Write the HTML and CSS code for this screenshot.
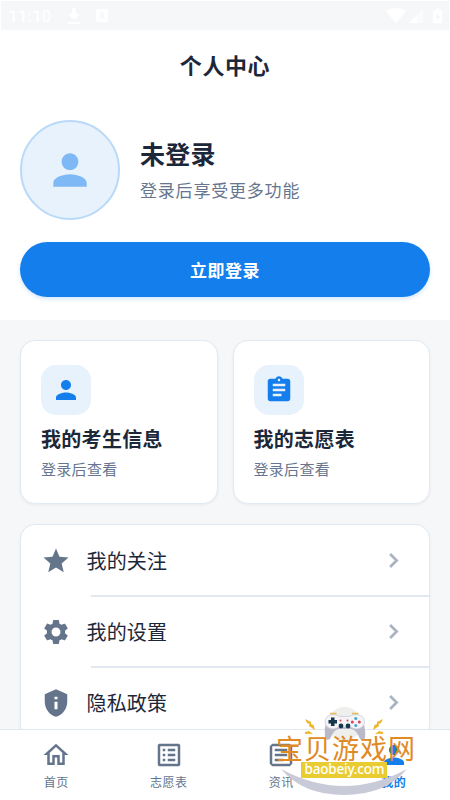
FILE: index.html
```html
<!DOCTYPE html>
<html lang="zh-CN">
<head>
<meta charset="utf-8">
<title>个人中心</title>
<link rel="stylesheet" href="styles.css">
</head>
<body>
<svg class="defs" width="0" height="0">
  <symbol id="person" viewBox="0 0 24 24"><path d="M12 12c2.21 0 4-1.79 4-4s-1.79-4-4-4-4 1.79-4 4 1.79 4 4 4zm0 2c-2.67 0-8 1.34-8 4v2h16v-2c0-2.66-5.33-4-8-4z"/></symbol>
  <symbol id="chevron" viewBox="0 0 24 24"><path d="M10 6L8.59 7.41 13.17 12l-4.58 4.59L10 18l6-6z" stroke="currentColor" stroke-width=".3"/></symbol>
</svg>
<div class="app">
  <div class="status">
    <span class="clock">11:10</span>
    <svg class="st-down" viewBox="0 0 12 16"><path d="M4 0h4v6h4l-6 6-6-6h4zM0 14h12v2H0z"/></svg>
    <svg class="st-box" viewBox="0 0 12 13"><path fill-rule="evenodd" d="M1 0h10l1 1v11l-1 1H1l-1-1V1zM5 3L3 10h1.3l.4-1.5h2.6l.4 1.5H9L7 3zm1 1.6l.8 2.7H5.200z"/></svg>
    <svg class="st-wifi" viewBox="0 0 20 15"><path d="M0 3Q10-3 20 3L10 15z"/></svg>
    <svg class="st-signal" viewBox="0 0 14 14"><path opacity=".45" d="M0 14L14 0v14z"/><path d="M0 14l8-8v8z"/></svg>
    <svg class="st-battery" viewBox="0 0 10 16"><path fill-rule="evenodd" d="M3 0h4v2h3v14H0V2h3zM6 4L2 10h2.500v4L8 8H5.500z"/></svg>
  </div>
  <header class="title">个人中心</header>
  <section class="profile">
    <div class="user">
      <div class="avatar"><svg><use href="#person"/></svg></div>
      <div class="who">
        <div class="name">未登录</div>
        <div class="hint">登录后享受更多功能</div>
      </div>
    </div>
    <div class="login">立即登录</div>
  </section>
  <main class="content">
    <div class="cards">
      <div class="card">
        <div class="tile"><svg><use href="#person"/></svg></div>
        <div class="card-title">我的考生信息</div>
        <div class="card-sub">登录后查看</div>
      </div>
      <div class="card">
        <div class="tile"><svg viewBox="0 0 24 24"><path d="M19 3h-4.180C14.400 1.840 13.300 1 12 1s-2.400.84-2.820 2H5c-1.100 0-2 .9-2 2v14c0 1.100.9 2 2 2h14c1.100 0 2-.9 2-2V5c0-1.100-.9-2-2-2zm-7 0c.55 0 1 .45 1 1s-.45 1-1 1-1-.45-1-1 .45-1 1-1zm2 14H7v-2h7v2zm3-4H7v-2h10v2zm0-4H7V7h10v2z"/></svg></div>
        <div class="card-title">我的志愿表</div>
        <div class="card-sub">登录后查看</div>
      </div>
    </div>
    <div class="menu">
      <div class="row">
        <svg class="lead" viewBox="0 0 24 24"><path d="M12 17.270L18.180 21l-1.640-7.030L22 9.240l-7.190-.61L12 2 9.190 8.630 2 9.240l5.460 4.730L5.820 21z"/></svg>
        <span>我的关注</span><svg class="go"><use href="#chevron"/></svg>
      </div>
      <div class="row">
        <svg class="lead" viewBox="0 0 24 24"><path d="M19.140 12.940c.04-.3.06-.61.06-.94 0-.32-.02-.64-.07-.94l2.030-1.580c.18-.14.23-.41.12-.61l-1.920-3.320c-.12-.22-.37-.29-.59-.22l-2.390.96c-.5-.38-1.030-.7-1.620-.94l-.36-2.540c-.04-.24-.24-.41-.48-.41h-3.840c-.24 0-.43.17-.47.41l-.36 2.540c-.59.24-1.130.57-1.620.94l-2.390-.96c-.22-.08-.47 0-.59.22L2.740 8.870c-.12.21-.08.47.12.61l2.030 1.580c-.05.3-.09.63-.09.94s.02.64.07.94l-2.030 1.580c-.18.14-.23.41-.12.61l1.920 3.320c.12.22.37.29.59.22l2.390-.96c.5.38 1.030.7 1.620.94l.36 2.540c.05.24.24.41.48.41h3.840c.24 0 .44-.17.47-.41l.36-2.540c.59-.24 1.130-.56 1.620-.94l2.390.96c.22.08.47 0 .59-.22l1.920-3.320c.12-.22.07-.47-.12-.61l-2.010-1.580zM12 15.600c-1.980 0-3.600-1.620-3.600-3.600s1.620-3.600 3.600-3.600 3.600 1.620 3.600 3.600-1.620 3.600-3.600 3.600z"/></svg>
        <span>我的设置</span><svg class="go"><use href="#chevron"/></svg>
      </div>
      <div class="row">
        <svg class="lead" viewBox="0 0 24 24"><path d="M12 1L3 5v6c0 5.550 3.840 10.740 9 12 5.160-1.260 9-6.450 9-12V5l-9-4zm1.200 16h-2.400v-6h2.400v6zm0-8h-2.400V7h2.400v2z"/></svg>
        <span>隐私政策</span><svg class="go"><use href="#chevron"/></svg>
      </div>
    </div>
  </main>
  <nav class="tabs">
    <div class="tab"><svg viewBox="0 0 24 24"><path d="M12 5.690l5 4.500V18h-2v-6H9v6H7v-7.810l5-4.500M12 3L2 12h3v8h6v-6h2v6h6v-8h3L12 3z"/></svg><span>首页</span></div>
    <div class="tab"><svg viewBox="0 0 24 24"><path fill-rule="evenodd" d="M4 3h16l1 1v16l-1 1H4l-1-1V4zM5 5v14h14V5zM11 7h6v2h-6zM11 11h6v2h-6zM11 15h6v2h-6zM7 7h2v2H7zM7 11h2v2H7zM7 15h2v2H7z"/></svg><span>志愿表</span></div>
    <div class="tab"><svg viewBox="0 0 24 24"><path fill-rule="evenodd" d="M5 3h14l2 2v14l-2 2H5l-2-2V5zM5 5v14h14V5zM7 7h10v2H7zM7 11h10v2H7zM7 15h7v2H7z"/></svg><span>资讯</span></div>
    <div class="tab active"><svg><use href="#person"/></svg><span>我的</span></div>
  </nav>
  <div class="mark">
    <svg class="mark-art" viewBox="0 0 150 96">
      <circle cx="74.500" cy="22" r="17" fill="#efefed"/>
      <path d="M11 67Q74 101 137 67Q115 93 74 93Q33 93 11 67z" fill="#c9cad8"/>
      <path d="M56 19h37q3 9 2 17-2 3-5 1-4-10-9-10H69q-5 0-9 10-4 2-5-1-1-8 1-17z" fill="#b9bac8"/>
      <path d="M62 12.500q5 0 8 2h9q3-2 8-2 8 1 7.500 8-1 6-8 6.500-3 0-6-2H69q-3 2-6 2-7-.5-8-6.500 0-7 7-8z" fill="#f3f3f8" stroke="#c6c7d2" stroke-width=".7"/>
      <path d="M60 11.500h6.500M82 11.500h6.500" fill="none" stroke="#e6bd5c" stroke-width="1.500"/>
      <path d="M61 15.500h3.500V18H67v3.500h-2.500V24H61v-2.500h-2.500V18H61z" fill="#17384c"/>
      <g fill="#17384c"><circle cx="71" cy="24" r="2.400"/><circle cx="78" cy="24" r="2.400"/></g>
      <g fill="#d6435c"><circle cx="70.500" cy="18.500" r="1"/><circle cx="77.500" cy="18.500" r="1"/><circle cx="82.300" cy="20" r="1.500"/><circle cx="89.300" cy="20" r="1.500"/></g>
      <g fill="#40a6c9"><circle cx="85.800" cy="16.500" r="1.500"/><circle cx="85.800" cy="23.500" r="1.500"/></g>
      <path d="M35 17l6 3v2l2.500 1 1.500 5-6-4 .5-2-2.500-1zM35 30l4-1 4 3-4-.3-4 .3zM113 17l-6 3v2l-2.500 1-1.500 5 6-4-.5-2 2.500-1zM113 30l-4-1-4 3 4-.3 4 .3z" fill="#efb52c"/>
      <path d="M31 60h86v16H31z" fill="#e9cc32"/>
    </svg>
    <div class="mark-name">宝贝游戏网</div>
    <div class="mark-url">baobeiy.com</div>
  </div>
</div>
</body>
</html>
```
FILE: styles.css
```css
* { box-sizing: border-box; }
body { margin: 0; font-family: "Noto Sans CJK SC", sans-serif; color: #1c2839; background: #fff; }
svg { display: block; fill: currentColor; flex: none; }
.defs { position: absolute; }
.app { position: relative; width: 450px; height: 800px; overflow: hidden; display: flex; flex-direction: column; }

.status { height: 30px; flex: none; background: #f5f7f9; border: solid #fff; border-width: 1px 1px 0 1px; color: #fff; display: flex; align-items: center; padding: 0 7px; }
.clock { font: 500 17px/28px Roboto, sans-serif; width: 60px; letter-spacing: .1px; }
.st-down { width: 12px; height: 16px; }
.st-box { width: 12px; height: 13px; margin-left: 16px; }
.st-wifi { width: 20px; height: 15px; margin-left: auto; }
.st-signal { width: 14px; height: 14px; margin-left: 3px; }
.st-battery { width: 9px; height: 16px; margin: 0 0 0 10px; }

.title { height: 70px; flex: none; line-height: 68px; text-align: center; font-size: 22px; font-weight: 700; letter-spacing: .6px; }
.profile { height: 220px; flex: none; padding: 20px 20px 0; }
.user { display: flex; align-items: center; gap: 20px; height: 100px; }
.avatar { width: 100px; height: 100px; border: 2px solid #bad9f8; border-radius: 50%; background: #e7f2fd; color: #7eb9f5; display: grid; place-items: center; }
.avatar svg { width: 50px; height: 50px; }
.who { padding-bottom: 2px; }
.name { font-size: 25px; line-height: 36px; font-weight: 700; letter-spacing: .3px; }
.hint { font-size: 17px; line-height: 26px; margin-top: 6px; letter-spacing: .8px; color: #67768e; }
.login { margin-top: 22px; height: 55px; line-height: 55px; border-radius: 28px; background: #137eec; box-shadow: 0 2px 4px #137eec30; color: #fff; text-align: center; font-size: 17px; font-weight: 700; letter-spacing: .5px; }

.content { flex: 1; min-height: 0; overflow: hidden; background: #f5f7f9; padding: 20px 20px 0; }
.cards { display: flex; gap: 15px; }
.card { flex: 1; height: 164px; padding: 24px 20px; background: #fff; border: 1px solid #e4eaf1; border-radius: 15px; box-shadow: 0 1px 3px #1c283910; }
.tile { width: 50px; height: 50px; border-radius: 15px; background: #e7f2fd; color: #137eec; display: grid; place-items: center; }
.tile svg { width: 30px; height: 30px; }
.card-title { font-size: 20px; line-height: 30px; margin-top: 9px; font-weight: 700; letter-spacing: .3px; }
.card-sub { font-size: 15px; line-height: 22px; margin-top: 4px; letter-spacing: .3px; color: #67768e; }
.menu { margin-top: 20px; background: #fff; border: 1px solid #e4eaf1; border-radius: 15px; box-shadow: 0 1px 3px #1c283910; }
.row { position: relative; height: 71.200px; display: flex; align-items: center; padding: 0 21px 0 20px; font-size: 20px; letter-spacing: .15px; }
.row + .row::before { content: ""; position: absolute; left: 70px; right: 0; top: -1px; height: 1.500px; background: #e2e8f0; }
.row span { flex: 1; margin-left: 15.500px; }
.lead { width: 30px; height: 30px; color: #64748b; }
.go { width: 29px; height: 29px; color: #a8b2c1; }

.tabs { height: 71px; flex: none; display: flex; background: #fff; border-top: 1px solid #e2e8f0; }
.tab { flex: 1; display: flex; flex-direction: column; align-items: center; padding-top: 10px; color: #64748b; font-size: 12px; line-height: 18px; letter-spacing: .5px; }
.tab svg { width: 30px; height: 30px; margin-bottom: 3px; }
.active { color: #137eec; font-weight: 700; }

.mark { position: absolute; left: 270px; top: 702px; width: 150px; height: 96px; }
.mark-art { position: absolute; inset: 0; width: 150px; height: 96px; }
.mark-name { position: absolute; left: 6px; top: 33px; white-space: nowrap; font-size: 27px; line-height: 25px; letter-spacing: 1px; color: #e08a26; }
.mark-url { position: absolute; left: 31px; top: 61px; width: 87px; text-align: center; color: #fff; font: 500 13.500px/13px "Noto Sans", sans-serif; letter-spacing: -.2px; }
```
